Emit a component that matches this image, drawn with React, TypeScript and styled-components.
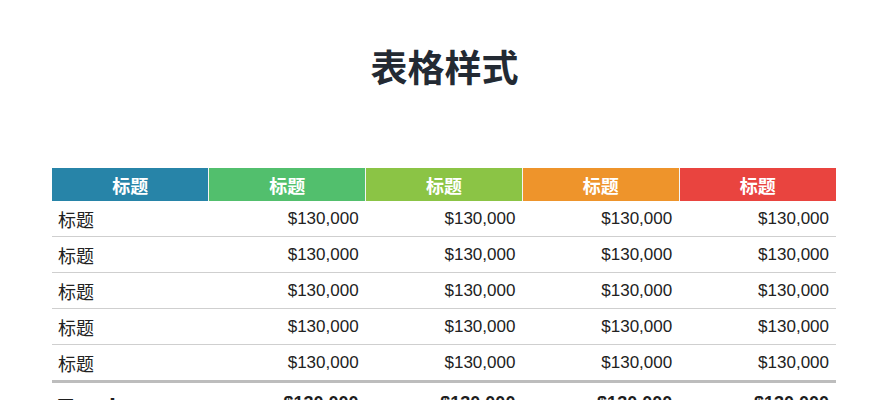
import React from 'react'
import styled, { createGlobalStyle } from 'styled-components'

const GlobalStyle = createGlobalStyle`
  html, body {
    margin: 0;
    padding: 0;
    background: #ffffff;
    font-family: "Liberation Sans", "Noto Sans CJK SC", sans-serif;
  }
`

const Page = styled.div`
  width: 889px;
  height: 400px;
  overflow: hidden;
  display: flex;
  flex-direction: column;
  align-items: center;
  padding-top: 44px;
  box-sizing: border-box;
  & > * {
    flex-shrink: 0;
  }
`

const Title = styled.h1`
  margin: 0;
  height: 124px;
  font-size: 37px;
  line-height: 44px;
  font-weight: 700;
  color: #232a33;
  font-family: "Noto Sans CJK SC", sans-serif;
`

const Table = styled.table`
  width: 784px;
  margin-left: -1px;
  border-collapse: collapse;
  table-layout: fixed;
  color: #222;
  font-size: 17px;
`

const HeadCell = styled.th<{ $bg: string }>`
  background: ${(p) => p.$bg};
  color: #ffffff;
  height: 33px;
  padding: 0 6px;
  font-weight: 700;
  font-size: 18px;
  text-align: center;
  border-left: 1px solid #f4f4f4;
  font-family: "Noto Sans CJK SC", sans-serif;
  &:first-child {
    border-left: none;
  }
`

const Row = styled.tr<{ $last?: boolean }>`
  border-bottom: ${(p) => (p.$last ? '3px solid #bdbdbd' : '1px solid #cfcfcf')};
`

const Cell = styled.td<{ $label?: boolean }>`
  height: 35px;
  padding: 0 7px 0 6px;
  text-align: ${(p) => (p.$label ? 'left' : 'right')};
  font-family: ${(p) =>
    p.$label ? '"Noto Sans CJK SC", sans-serif' : '"Liberation Sans", sans-serif'};
  font-size: ${(p) => (p.$label ? '18px' : '17px')};
  white-space: nowrap;
`

const TotalCell = styled.td<{ $label?: boolean }>`
  padding: 10px 7px 0 6px;
  vertical-align: top;
  text-align: ${(p) => (p.$label ? 'left' : 'right')};
  font-weight: 700;
  font-size: ${(p) => (p.$label ? '25px' : '18px')};
  line-height: ${(p) => (p.$label ? '30px' : '20px')};
  color: #1e1e1e;
`

const headColors = ['#2784a8', '#52bf6d', '#8bc445', '#ee942b', '#e9443f']
const rows = [0, 1, 2, 3, 4]

export default function App() {
  return (
    <>
      <GlobalStyle />
      <Page>
        <Title>表格样式</Title>
        <Table>
          <thead>
            <tr>
              {headColors.map((c, i) => (
                <HeadCell key={i} $bg={c}>
                  标题
                </HeadCell>
              ))}
            </tr>
          </thead>
          <tbody>
            {rows.map((r) => (
              <Row key={r} $last={r === rows.length - 1}>
                <Cell $label>标题</Cell>
                <Cell>$130,000</Cell>
                <Cell>$130,000</Cell>
                <Cell>$130,000</Cell>
                <Cell>$130,000</Cell>
              </Row>
            ))}
            <tr>
              <TotalCell $label>Total</TotalCell>
              <TotalCell>$130,000</TotalCell>
              <TotalCell>$130,000</TotalCell>
              <TotalCell>$130,000</TotalCell>
              <TotalCell>$130,000</TotalCell>
            </tr>
          </tbody>
        </Table>
      </Page>
    </>
  )
}
